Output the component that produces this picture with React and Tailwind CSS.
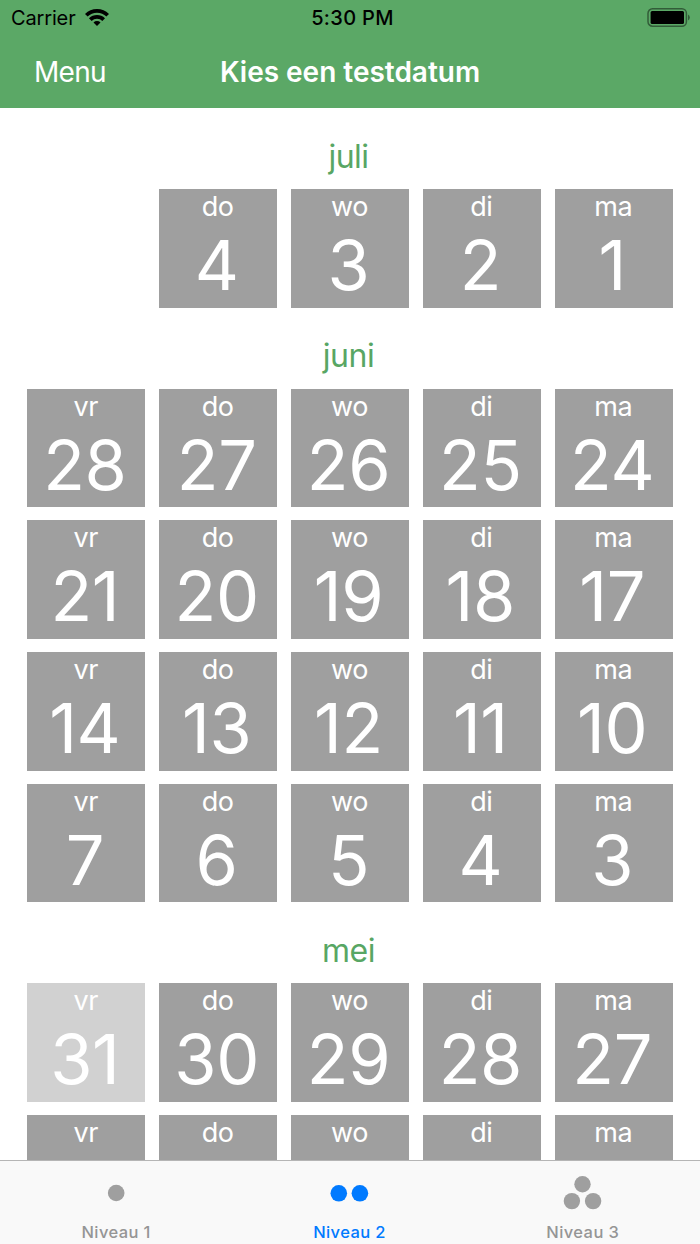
const months = [
    { name: "juli", weeks: [[null, 4, 3, 2, 1]] },
    {
        name: "juni",
        weeks: [
            [28, 27, 26, 25, 24],
            [21, 20, 19, 18, 17],
            [14, 13, 12, 11, 10],
            [7, 6, 5, 4, 3],
        ],
    },
    // the last week only shows its day names above the tab bar
    { name: "mei", weeks: [[31, 30, 29, 28, 27], ["", "", "", "", ""]] },
];

const dayNames = ["vr", "do", "wo", "di", "ma"];

function StatusBar() {
    return (
        <div className="flex h-[36px] items-center justify-between pl-[11px] pr-[9px] text-[20px] text-black">
            <div className="flex w-[200px] items-center gap-[9px]">
                <span className="tracking-[-0.15px]">Carrier</span>
                <svg width="24" height="17" viewBox="0 0 24 17" fill="none" stroke="#000" strokeWidth="3.7" className="mb-[2px]">
                    <path d="M1.3 6.3a15.1 15.1 0 0 1 21.4 0" />
                    <path d="M5.3 10.6a9.5 9.5 0 0 1 13.4 0" />
                    <path d="M12 17l-3.5-3.5a5 5 0 0 1 7 0z" fill="#000" stroke="none" />
                </svg>
            </div>
            <span className="pl-[3px] font-medium tracking-[0.35px]">5:30 PM</span>
            <div className="flex w-[200px] justify-end pb-[2px]">
                <svg width="44" height="19" viewBox="0 0 44 19">
                    <rect x="1" y="0.8" width="38.4" height="17.4" rx="4.5" fill="none" stroke="#000" strokeOpacity=".45" strokeWidth="1.5" />
                    <rect x="3.6" y="3" width="33.4" height="13" rx="1.5" fill="#000" />
                    <path d="M41 6.5a3.4 3.4 0 0 1 0 6z" fill="#000" fillOpacity=".45" />
                </svg>
            </div>
        </div>
    );
}

function DayTile({ name, day, light }) {
    return (
        <button className={`flex h-[118.2px] flex-col items-center text-white ${light ? "bg-[#d1d1d1]" : "bg-[#9f9f9f]"}`}>
            <span className="mt-[1px] pr-px text-[27px] leading-[34px] tracking-[-0.4px]">{name}</span>
            <span className="pr-[3px] text-[68.5px] leading-[83px] tracking-[-0.4px]">{day}</span>
        </button>
    );
}

function Month({ name, weeks }) {
    return (
        <section>
            <h2 className="h-[81px] pt-[28.6px] pr-[3px] text-center text-[32px] leading-[40px] tracking-[-0.5px] text-[#58a664]">
                {name}
            </h2>
            <div className="flex flex-col gap-[13.7px]">
                {weeks.map((week, i) => (
                    <div key={i} className="grid grid-cols-5 gap-[13.6px]">
                        {week.map((day, j) =>
                            day !== null ? (
                                <DayTile key={j} name={dayNames[j]} day={day} light={name === "mei" && day === 31} />
                            ) : (
                                <div key={j} />
                            )
                        )}
                    </div>
                ))}
            </div>
        </section>
    );
}

function Tab({ label, active, children }) {
    return (
        <button className={`flex flex-1 flex-col items-center ${active ? "text-[#007aff]" : "text-[#959595]"}`}>
            <svg width="40" height="40" viewBox="0 0 40 40" className="mt-[12px]" fill={active ? "#007aff" : "#9f9f9f"}>
                {children}
            </svg>
            <span className="mt-[9px] pr-px text-[16.5px] leading-[21px] font-medium tracking-[0.4px]">{label}</span>
        </button>
    );
}

export default function App() {
    return (
        <div className="flex h-[1244px] w-[700px] flex-col overflow-hidden bg-white font-['Inter',sans-serif]">
            <header className="h-[108.4px] shrink-0 bg-[#5ba866]">
                <StatusBar />
                <div className="grid h-[71px] grid-cols-[1fr_auto_1fr] items-center text-[28px] text-white">
                    <button className="pl-[34px] text-left tracking-[-0.7px]">Menu</button>
                    <h1 className="font-semibold tracking-[-0.02px] whitespace-nowrap">Kies een testdatum</h1>
                </div>
            </header>
            <main className="min-h-0 flex-1 overflow-hidden px-[27.2px]">
                <div className="flex flex-col">
                    {months.map((month) => (
                        <Month key={month.name} {...month} />
                    ))}
                </div>
            </main>
            <nav className="flex h-[84px] shrink-0 border-t border-[#b5b5b5] bg-[#f9f9f9]">
                <Tab label="Niveau 1">
                    <circle cx="19.2" cy="20" r="8.3" />
                </Tab>
                <Tab label="Niveau 2" active>
                    <circle cx="8.8" cy="20.3" r="8.3" />
                    <circle cx="29.9" cy="20.3" r="8.3" />
                </Tab>
                <Tab label="Niveau 3">
                    <circle cx="19.5" cy="11.2" r="8.2" />
                    <circle cx="8.9" cy="28.1" r="8.2" />
                    <circle cx="30.1" cy="28.1" r="8.2" />
                </Tab>
            </nav>
        </div>
    );
}
